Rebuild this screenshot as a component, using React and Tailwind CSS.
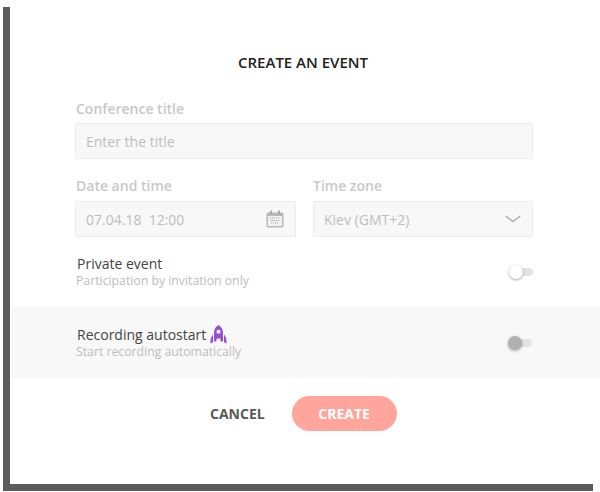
import React from 'react';

const font = "font-['Open_Sans',sans-serif]";

function CalendarIcon() {
  return (
    <svg width="18" height="18" viewBox="0 0 18 18" fill="none">
      <rect x="0.5" y="2.5" width="17" height="15" rx="1.5" fill="#b9b9b9" />
      <rect x="4" y="0.5" width="2" height="4" fill="#a8a8a8" />
      <rect x="12" y="0.5" width="2" height="4" fill="#a8a8a8" />
      <rect x="2" y="6" width="14" height="10" fill="#f2f2f2" />
      <path d="M4 8h10M4 10.5h10M5 13h8" stroke="#a9a9a9" strokeWidth="1.2" strokeDasharray="1.2 0.8" />
    </svg>
  );
}

function ChevronIcon() {
  return (
    <svg width="16" height="8" viewBox="0 0 16 8" fill="none">
      <path d="M0.700 1 8 6.500 15.300 1" stroke="#a3a3a3" strokeWidth="1.2" />
    </svg>
  );
}

function RocketIcon() {
  return (
    <svg width="17" height="19" viewBox="0 0 17 19" fill="#9a4fd0">
      <path fillRule="evenodd" d="M8.500 0C11.500 1.500 13 4.500 13 8v8.500h-2.200l-.6-3H6.800l-.6 3H4V8c0-3.500 1.500-6.500 4.500-8ZM8.500 4.700a2 2 0 1 0 0 4 2 2 0 0 0 0-4Z" />
      <path d="M3 9.500v7.800L0.500 18.500C0.200 15 0.800 11.800 3 9.500ZM14 9.500v7.800l2.500 1.200c.3-3.500-.3-6.700-2.500-9Z" />
    </svg>
  );
}

function Toggle({ on }) {
  return (
    <div className="relative h-[8px] w-[23px] rounded-full bg-[#e3e3e3]">
      <div
        className={
          on
            ? 'absolute left-[-1px] top-[-3px] h-[14px] w-[14px] rounded-full bg-[#b0b0b0] shadow-[0_1px_3px_rgba(0,0,0,0.3)]'
            : 'absolute left-[-1px] top-[-3px] h-[14px] w-[14px] rounded-full bg-white shadow-[0_1px_3px_rgba(0,0,0,0.35)]'
        }
      />
    </div>
  );
}

export default function App() {
  return (
    <div className={`${font} h-[492px] w-[600px] overflow-hidden bg-white pb-px pl-[3px] pr-[7px] pt-[7px]`}>
      <div className="flex h-full flex-col border-b-[7px] border-l-[7px] border-[#5c5c5c] bg-white">
        <h1 className="mt-[45px] pl-[3px] text-center text-[15px] font-semibold leading-[20px] text-[#222]">CREATE AN EVENT</h1>

        <div className="ml-[65px] mt-[27px] w-[458px]">
          <label className="ml-px block text-[14px] font-semibold leading-[20px] text-[#c8c8c8]">Conference title</label>
          <div className="mt-[4px] flex h-[36px] items-center rounded-[2px] border border-[#ececec] bg-[#f8f8f8] px-[10px] text-[14px] text-[#bdbdbd]">
            Enter the title
          </div>
        </div>

        <div className="ml-[65px] mt-[17px] flex w-[458px] gap-[17px]">
          <div className="w-[221px]">
            <label className="ml-px block text-[14px] font-semibold leading-[20px] text-[#c8c8c8]">Date and time</label>
            <div className="mt-[5px] flex h-[36px] items-center justify-between rounded-[2px] border border-[#ececec] bg-[#f8f8f8] pl-[10px] pr-[11px] text-[14px] text-[#bdbdbd]">
              <span className="whitespace-pre">07.04.18  12:00</span>
              <CalendarIcon />
            </div>
          </div>
          <div className="w-[220px]">
            <label className="block text-[14px] font-semibold leading-[20px] text-[#c8c8c8]">Time zone</label>
            <div className="mt-[5px] flex h-[36px] items-center justify-between rounded-[2px] border border-[#ececec] bg-[#f8f8f8] pl-[10px] pr-[11px] text-[14px] text-[#bdbdbd]">
              <span>Kiev (GMT+2)</span>
              <ChevronIcon />
            </div>
          </div>
        </div>

        <div className="ml-[66px] mt-[18px] flex w-[457px] items-center justify-between">
          <div>
            <div className="ml-px text-[14px] leading-[18px] text-[#444]">Private event</div>
            <div className="text-[12.25px] leading-[16px] text-[#bdbdbd]">Participation by invitation only</div>
          </div>
          <Toggle />
        </div>

        <div className="ml-px mr-[-7px] mt-[18px] flex h-[71px] items-center bg-[#f8f8f8] pl-[65px] pr-[68px]">
          <div className="flex-1">
            <div className="ml-px flex items-center gap-[4px] text-[14px] leading-[18px] text-[#444]">
              Recording autostart
              <RocketIcon />
            </div>
            <div className="text-[12.25px] leading-[16px] text-[#bdbdbd]">Start recording automatically</div>
          </div>
          <Toggle on />
        </div>

        <div className="mt-[18px] flex items-center">
          <button className="ml-[200px] text-[14px] font-bold text-[#5a5a5a]">CANCEL</button>
          <button className="ml-[27px] h-[35px] w-[105px] rounded-full bg-[#ffa59b] text-[14px] font-bold text-white">CREATE</button>
        </div>
      </div>
    </div>
  );
}
